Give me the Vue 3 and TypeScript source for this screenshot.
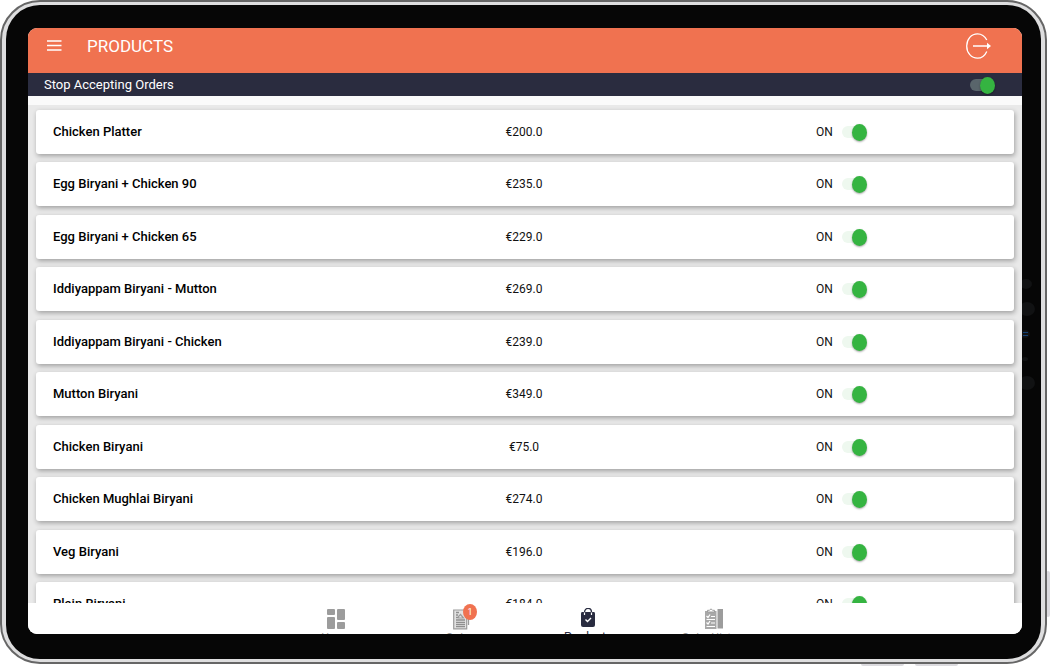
<script setup lang="ts">
import { ref } from 'vue'

interface Product {
  name: string
  price: string
  on: boolean
}

const accepting = ref(true)
const products = ref<Product[]>([
  { name: 'Chicken Platter', price: '€200.0', on: true },
  { name: 'Egg Biryani + Chicken 90', price: '€235.0', on: true },
  { name: 'Egg Biryani + Chicken 65', price: '€229.0', on: true },
  { name: 'Iddiyappam Biryani - Mutton', price: '€269.0', on: true },
  { name: 'Iddiyappam Biryani - Chicken', price: '€239.0', on: true },
  { name: 'Mutton Biryani', price: '€349.0', on: true },
  { name: 'Chicken Biryani', price: '€75.0', on: true },
  { name: 'Chicken Mughlai Biryani', price: '€274.0', on: true },
  { name: 'Veg Biryani', price: '€196.0', on: true },
  { name: 'Plain Biryani', price: '€184.0', on: true },
])
</script>

<template>
  <div class="stage">
    <span class="side-button right"></span>
    <span class="side-button bottom-a"></span>
    <span class="side-button bottom-b"></span>
    <div class="device">
      <div class="bezel">
        <div class="camera" aria-hidden="true">
          <svg width="20" height="120" viewBox="0 0 20 120">
            <g fill="#111213">
              <ellipse cx="5" cy="9" rx="6" ry="5" />
              <ellipse cx="6" cy="34" rx="8" ry="7" />
              <ellipse cx="4" cy="59" rx="5" ry="4" />
              <ellipse cx="4" cy="84" rx="3" ry="2" />
              <ellipse cx="6" cy="108" rx="8" ry="7" />
            </g>
            <path d="M2 57.500h5M2 60.500h5" stroke="#123f74" stroke-width="1" />
          </svg>
        </div>
        <main class="screen">
          <header class="topbar">
            <button class="icon-button menu" type="button" aria-label="Menu">
              <svg width="15" height="11" viewBox="0 0 15 11"><path d="M0 1h14.500M0 5.500h14.500M0 10h14.500" stroke="#fff" stroke-width="1.400" /></svg>
            </button>
            <h1>PRODUCTS</h1>
            <button class="icon-button logout" type="button" aria-label="Log out">
              <svg width="27" height="28" viewBox="0 0 27 28" fill="none" stroke="#fff">
                <path d="M21.800 8C19.800 4.200 16.200 1.800 12.500 1.800C6.300 1.800 1.700 7.200 1.700 14S6.300 26.200 12.500 26.200C16.200 26.200 19.800 23.800 21.800 19.500" stroke-width="1.300" />
                <path d="M8 14h15" stroke-width="1.600" />
                <path d="M22 10.800L26 14L22 17.200z" fill="#fff" stroke="none" />
              </svg>
            </button>
          </header>
          <div class="status">
            <label for="accepting">Stop Accepting Orders</label>
            <input id="accepting" v-model="accepting" class="toggle dark" type="checkbox" role="switch" />
          </div>
          <ul class="list">
            <li v-for="(product, i) in products" :key="product.name" class="card">
              <span class="name">{{ product.name }}</span>
              <span class="price">{{ product.price }}</span>
              <span class="state">
                <label :for="'product-' + i">{{ product.on ? 'ON' : 'OFF' }}</label>
                <input :id="'product-' + i" v-model="product.on" class="toggle" type="checkbox" role="switch" />
              </span>
            </li>
          </ul>
          <nav class="tabs">
            <a class="tab" href="#home">
              <svg width="20" height="22" viewBox="0 0 20 22" fill="#9c9c9c">
                <rect x="1" y="1" width="8" height="6" rx="1" /><rect x="1" y="9" width="8" height="12" rx="1" />
                <rect x="11" y="1" width="8" height="11" rx="1" /><rect x="11" y="14" width="8" height="7" rx="1" />
              </svg>
              <span>Home</span>
            </a>
            <a class="tab" href="#orders">
              <svg width="20" height="22" viewBox="0 0 20 22" fill="none" stroke="#9c9c9c">
                <path d="M1.700 2h13v18.800h-13z" fill="#e2e2e2" stroke-width="1.200" />
                <path d="M4 4.500h3M4 7h2M4 9.500h2M4 12h9M4 14.300h9M4 16.500h9M4 18.700h9" stroke="#8f8f8f" stroke-width="1.300" />
                <path d="M6.500 10V8.500L8.500 6.500L11.500 10z" stroke-width="1.200" />
                <path d="M16.500 11v6" stroke-width="1.300" />
              </svg>
              <b class="badge">1</b>
              <span>Orders</span>
            </a>
            <a class="tab active" href="#products">
              <svg width="20" height="22" viewBox="0 0 20 22">
                <path d="M4 4h12q1 0 1 1.500V17q0 2-2 2H5q-2 0-2-2V5.500Q3 4 4 4z" fill="#292c40" />
                <path d="M6.500 7V4" fill="none" stroke="#fff" stroke-width="1.200" />
                <path d="M13.500 7V4" fill="none" stroke="#fff" stroke-width="1.200" />
                <path d="M6.500 4.500C6.500 -1 13.500 -1 13.500 4.500" fill="none" stroke="#292c40" stroke-width="1.300" />
                <path d="M7.500 11.500l2 2 3.500-3.500" fill="none" stroke="#fff" stroke-width="1.400" />
              </svg>
              <span>Products</span>
            </a>
            <a class="tab" href="#history">
              <svg width="20" height="22" viewBox="0 0 20 22">
                <path d="M13.500 1H19v19.500h-5.500z" fill="#9c9c9c" />
                <path d="M1 3h11.500v18H1z" fill="#a8a8a8" />
                <path d="M3.500 4V2.300H5.500L7 .8L8.500 2.300H10.500V4z" fill="#fff" stroke="#9c9c9c" stroke-width="1" />
                <path d="M2.500 8l1.500 1.500L6 6.500M2.500 14.500l1.500 1.500L6 13M7 8.500h4M2.500 11.500h8.500M7 15h4M2.500 18.500h8.500" fill="none" stroke="#fff" stroke-width="1.200" />
              </svg>
              <span>Order History</span>
            </a>
          </nav>
        </main>
      </div>
    </div>
  </div>
</template>

<style>
html, body, #app { height: 100%; }
body { margin: 0; background: #fff; }
</style>

<style scoped>
* { box-sizing: border-box; }
.stage { position: relative; height: 100vh; padding: 0 4px 3px 0; font-family: Roboto, "Liberation Sans", sans-serif; overflow: hidden; }
.device { position: relative; height: 100%; padding: 3px 4px; border: 2px solid #666; border-radius: 40px; background: #dededf; }
.bezel { position: relative; height: 100%; padding: 23px 19px 25px 22px; border-radius: 34px; background: #060606; }
.side-button { position: absolute; background: #dcdbdf; }
.right { right: 1px; bottom: 50px; width: 4px; height: 46px; border-radius: 2px; }
.bottom-a, .bottom-b { bottom: 1px; width: 43px; height: 4px; border-radius: 2px; }
.bottom-a { right: 147px; }
.bottom-b { right: 93px; }
.camera { position: absolute; top: 270px; right: 0; }
.camera svg { display: block; }
.screen { position: relative; display: flex; flex-direction: column; height: 100%; border-radius: 9px; overflow: hidden; background: #fafafa; }
.topbar { display: flex; flex: none; align-items: flex-start; height: 45px; padding: 0 30px 0 19px; background: #f07250; }
.icon-button { padding: 0; border: 0; background: none; line-height: 0; cursor: pointer; }
.menu { margin: 12px 25px 0 0; }
.logout { margin: 4px 0 0 auto; }
h1 { margin: 8px 0 0; color: #fff; font-size: 17px; line-height: 20px; font-weight: 400; }
.status { display: flex; flex: none; align-items: center; justify-content: space-between; height: 23px; padding: 0 27px 0 16px; background: #2a2c3f; color: #fff; font-size: 13px; }
.list { flex: 1; min-height: 0; margin: 9px 0 0; padding: 5px 8px 0; overflow: hidden; list-style: none; background: #e9e9e9; }
.card { display: grid; grid-template-columns: 45fr 10fr 26fr 19fr; align-items: center; height: 44px; margin-bottom: 8px; padding: 0 19px 1px 17px; border-radius: 3px; background: #fff; box-shadow: 1px 2px 5px rgba(0, 0, 0, .32); color: #111; font-size: 12px; }
.card:nth-child(even) { margin-bottom: 9px; }
.name { color: #000; font-size: 13px; line-height: 16px; font-weight: 500; white-space: nowrap; }
.price { text-align: center; }
.state { grid-column: 4; display: flex; align-items: center; gap: 9px; }
.toggle { position: relative; appearance: none; width: 25px; height: 18px; margin: 0; cursor: pointer; }
.toggle::before { content: ""; position: absolute; inset: 3px 4px 3px 0; border-radius: 6px; background: #eef8ef; }
.toggle::after { content: ""; position: absolute; top: 1px; left: 0; width: 15px; height: 17px; border-radius: 50%; background: #aaa; }
.toggle:checked::after { left: auto; right: 0; background: #35b441; box-shadow: 0 1px 2px rgba(0, 0, 0, .35); }
.dark::before { background: #59656b; }
.tabs { display: flex; flex: none; justify-content: center; height: 31px; padding-top: 5px; background: #fff; }
.tab { position: relative; display: flex; flex-direction: column; align-items: center; gap: 1px; width: 126px; color: #999; font-size: 11px; line-height: 13px; text-decoration: none; }
.tab svg { flex: none; }
.active { color: #292c40; font-size: 12px; }
.badge { position: absolute; top: -4px; left: 64px; width: 14px; height: 16px; border-radius: 50%; background: #f07250; color: #fff; font-size: 9px; line-height: 16px; font-weight: 400; text-align: center; }
</style>
